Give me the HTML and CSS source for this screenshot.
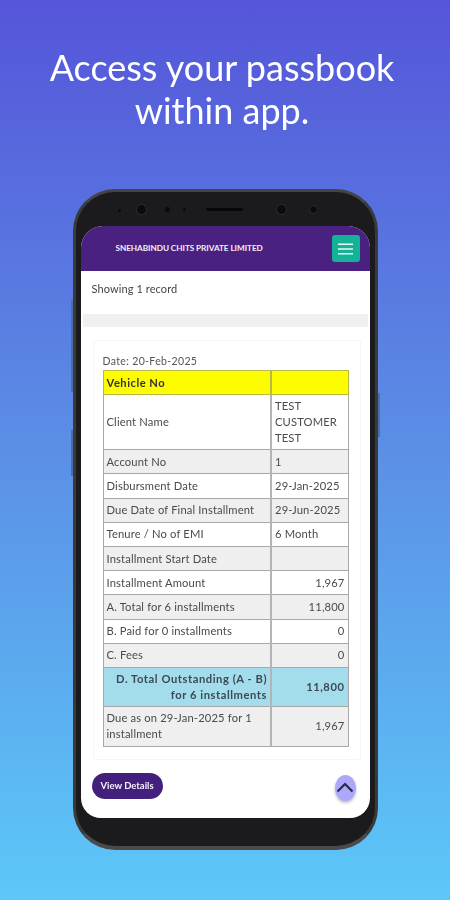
FILE: index.html
```
<!DOCTYPE html>
<html lang="en">
<head>
<meta charset="utf-8">
<title>Passbook</title>
<link rel="stylesheet" href="styles.css">
</head>
<body>
<h1 class="headline">Access your passbook<br>within app.</h1>
<div class="phone">
  <span class="side side-a"></span><span class="side side-b"></span><span class="side side-c"></span>
  <div class="bezel-top">
    <span class="dot dot-sm"></span><span class="dot dot-lg"></span><span class="dot dot-xs"></span><span class="dot dot-xs2"></span>
    <span class="speaker"></span>
    <span class="dot dot-lg dot-r1"></span><span class="dot dot-md"></span>
  </div>
  <div class="screen">
    <header class="appbar">
      <span class="brand">SNEHABINDU CHITS PRIVATE LIMITED</span>
      <button class="menu" aria-label="Menu">
        <svg width="15" height="12" viewBox="0 0 15 12"><path d="M0 1.2h15M0 6h15M0 10.8h15" stroke="#e8f7f3" stroke-width="1.5"/></svg>
      </button>
    </header>
    <div class="records">Showing 1 record</div>
    <div class="band"></div>
    <div class="card">
      <div class="date">Date: 20-Feb-2025</div>
      <table class="book">
        <tr class="yellow"><td class="l">Vehicle No</td><td></td></tr>
        <tr class="client"><td>Client Name</td><td>TEST CUSTOMER TEST</td></tr>
        <tr class="grey"><td>Account No</td><td>1</td></tr>
        <tr><td>Disbursment Date</td><td>29-Jan-2025</td></tr>
        <tr class="grey"><td>Due Date of Final Installment</td><td>29-Jun-2025</td></tr>
        <tr><td>Tenure / No of EMI</td><td>6 Month</td></tr>
        <tr class="grey"><td>Installment Start Date</td><td></td></tr>
        <tr><td>Installment Amount</td><td class="num">1,967</td></tr>
        <tr class="grey"><td>A. Total for 6 installments</td><td class="num">11,800</td></tr>
        <tr><td>B. Paid for 0 installments</td><td class="num">0</td></tr>
        <tr class="grey"><td>C. Fees</td><td class="num">0</td></tr>
        <tr class="blue"><td class="num">D. Total Outstanding (A - B)<br>for 6 installments</td><td class="num">11,800</td></tr>
        <tr class="grey due"><td>Due as on 29-Jan-2025 for 1 installment</td><td class="num">1,967</td></tr>
      </table>
    </div>
    <div class="actions">
      <button class="details">View Details</button>
      <button class="up" aria-label="Top">
        <svg width="18" height="11" viewBox="0 0 18 11"><path d="M1.5 9.5L9 2l7.5 7.5" fill="none" stroke="#2b2b4a" stroke-width="2.2"/></svg>
      </button>
    </div>
  </div>
</div>
</body>
</html>
```
FILE: styles.css
```
* { box-sizing: border-box; }
html, body { margin: 0; height: 900px; overflow: hidden; }
body {
  width: 450px;
  background: linear-gradient(180deg, #5555d9 0%, #5b8fe6 50%, #5cc8f8 100%);
  display: flex;
  flex-direction: column;
  align-items: center;
  padding-top: 46px;
  font-family: "Lato", "Liberation Sans", sans-serif;
}
.headline {
  margin: 0 6px 0 0;
  color: #fff;
  font: 400 36px/43px "Lato", "Liberation Sans", sans-serif;
  text-align: center;
  height: 143px;
  filter: blur(0.3px);
}
.phone {
  position: relative;
  width: 305px;
  height: 661px;
  background: #1b1b1d;
  border-radius: 42px;
  border: 3px solid #3a3a3a;
  border-top-color: #444;
  border-bottom: 4px solid #4a4a4a;
  padding: 0 5px;
  display: flex;
  flex-direction: column;
}
.side { position: absolute; width: 2px; background: #4a6ea6; }
.side-a { left: -5px; top: 108px; height: 92px; }
.side-b { left: -5px; top: 238px; height: 46px; }
.side-c { right: -5px; top: 201px; height: 44px; }
.bezel-top {
  height: 34px;
  position: relative;
  flex: none;
  filter: blur(0.5px);
}
.dot { position: absolute; border-radius: 50%; background: #0b0b0d; }
.dot-sm { left: 37px; top: 17px; width: 3px; height: 3px; }
.dot-lg { left: 55px; top: 12px; width: 11px; height: 11px; border: 1px solid #2d2d33; }
.dot-xs { left: 84px; top: 15px; width: 5px; height: 5px; }
.dot-xs2 { left: 102px; top: 16px; width: 3px; height: 3px; }
.dot-r1 { left: 195px; }
.dot-md { left: 228px; top: 13px; width: 9px; height: 9px; border: 1px solid #2d2d33; }
.speaker { position: absolute; left: 125px; top: 16px; width: 37px; height: 3px; border-radius: 2px; background: #08080a; }
.screen {
  flex: 1;
  margin-bottom: 28px;
  background: #fff;
  border-radius: 22px 22px 20px 20px;
  overflow: hidden;
  display: flex;
  flex-direction: column;
  width: 289px;
  filter: blur(0.35px);
}
.appbar {
  height: 45px;
  flex: none;
  background: #4a2180;
  display: flex;
  align-items: center;
  justify-content: space-between;
  padding: 0 10px 0 35px;
}
.brand { color: #f2eefa; font: 700 8.2px/1 "Lato", sans-serif; letter-spacing: -0.05px; }
.menu {
  width: 28px; height: 27px;
  border: 0; border-radius: 3px; padding: 0;
  background: #13b397;
  display: flex; align-items: center; justify-content: center;
}
.records { height: 43px; flex: none; padding: 11px 11px 0; font-size: 11px; line-height: 14px; color: #444; letter-spacing: 0.1px; }
.band { height: 13px; flex: none; margin: 0 2px; background: #f0f0f1; }
.card {
  margin: 13px 9px 0 12px;
  padding: 14px 9px 12px 9px;
  border: 1px solid #f5f5f5;
  border-radius: 3px;
  flex: none;
}
.date { font-size: 10.5px; line-height: 13px; height: 15px; color: #555; letter-spacing: 0.35px; }
.book {
  width: 246px;
  border-collapse: collapse;
  table-layout: fixed;
  font-size: 11.2px;
  line-height: 16px;
  color: #4a4a4a;
  letter-spacing: 0.15px;
}
.book td { border: 1px solid #a8a8a8; padding: 0 3px; height: 24.2px; vertical-align: middle; }
.book td:first-child { width: 168px; border-right-width: 2px; border-right-color: #b4b4b4; }
.book .grey td { background: #efefef; }
.book .yellow td { background: #fdfd00; color: #333; font-weight: 700; border-color: #b9b94a; letter-spacing: 0.5px; }
.book .client td { height: 55px; }
.book .blue td { background: #a3dcea; font-weight: 700; height: 39px; letter-spacing: 0.55px; color: #3b4a55; }
.book .due td { height: 40px; }
.book .num { text-align: right; }
.actions {
  display: flex;
  align-items: flex-start;
  justify-content: space-between;
  padding: 13px 14px 0 11px;
}
.details {
  width: 71px; height: 26px;
  border: 0; border-radius: 13px; padding: 0;
  background: #43207c;
  color: #f5f1fb;
  font: 700 9.5px "Lato", sans-serif;
}
.up {
  margin-top: 2px;
  width: 21px; height: 26px;
  border: 0; border-radius: 50%; padding: 0;
  background: #aca8fb;
  box-shadow: 0 2px 3px rgba(0,0,0,.25);
  display: flex; align-items: center; justify-content: center;
}
```
